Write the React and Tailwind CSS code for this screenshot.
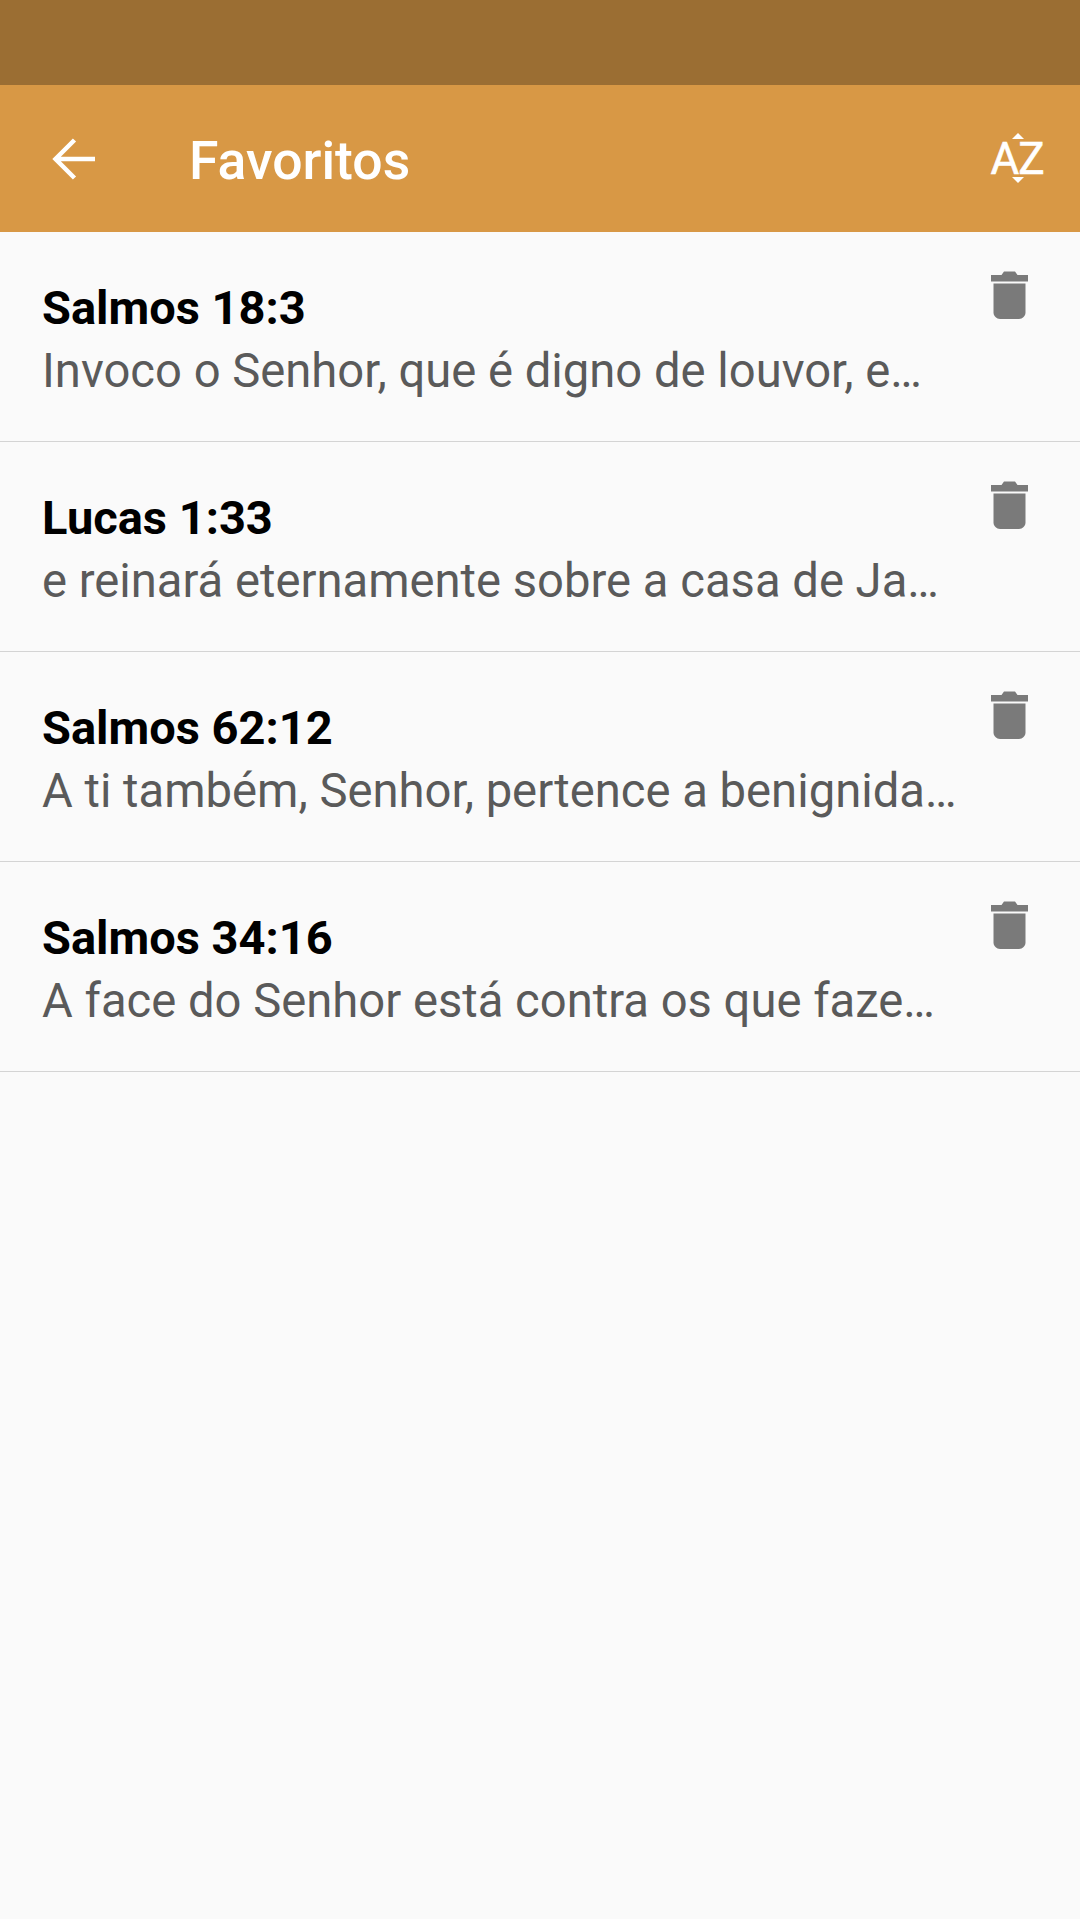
const favorites = [
  { ref: "Salmos 18:3", text: "Invoco o Senhor, que é digno de louvor, e…" },
  { ref: "Lucas 1:33", text: "e reinará eternamente sobre a casa de Ja…" },
  { ref: "Salmos 62:12", text: "A ti também, Senhor, pertence a benignida…" },
  { ref: "Salmos 34:16", text: "A face do Senhor está contra os que faze…" },
];

const TrashIcon = () => (
  <svg className="w-[37px] h-[49px] block" viewBox="0 0 37 48" fill="#7a7a7a">
    <path d="M0 3.500h10.500L13 0h11l2.500 3.500H37V10H0z" />
    <path d="M2.500 12h32v29c0 3.500-3 6.500-6.500 6.500H9c-3.500 0-6.500-3-6.500-6.500z" />
  </svg>
);

const SortIcon = () => (
  <div className="relative w-[54px] h-[54px] flex items-center justify-center">
    <svg className="absolute left-[22px] top-[1px] w-[12px] h-[6px]" viewBox="0 0 12 6" fill="#fff">
      <path d="M6 0l6 6H0z" />
    </svg>
    <span className="text-[44px] leading-none text-white tracking-[-1px] [-webkit-text-stroke:0.6px_#fff]">AZ</span>
    <svg className="absolute left-[22px] bottom-[3px] w-[12px] h-[6px]" viewBox="0 0 12 6" fill="#fff">
      <path d="M0 0h12L6 6z" />
    </svg>
  </div>
);

const Row = ({ item }) => (
  <div className="h-[210px] border-b border-[#d4d4d4] flex justify-between pl-[42px] pr-[52px]">
    <div className="pt-[46px] min-w-0">
      <div className="text-[47px] leading-[60px] font-bold text-black">{item.ref}</div>
      <div className="text-[47.200px] leading-[67px] text-[#5a5a5a] whitespace-nowrap">{item.text}</div>
    </div>
    <div className="pt-[39px]">
      <TrashIcon />
    </div>
  </div>
);

export default function App() {
  return (
    <div className="w-[1080px] h-[1919px] bg-[#fafafa] font-['Roboto',sans-serif]">
      <div className="h-[85px] bg-[#9b6e33]" />
      <header className="h-[147px] bg-[#d89845] flex items-center justify-between pl-[52px] pr-[36px]">
        <div className="flex items-center">
          <svg className="w-[43px] h-[42px]" viewBox="0 0 43 42" fill="none" stroke="#fff" strokeWidth="4.500">
            <path d="M43 21H4M22.500 2L3.500 21l19 19" />
          </svg>
          <h1 className="ml-[94px] mt-[4px] text-[53.500px] leading-none font-medium text-white">Favoritos</h1>
        </div>
        <SortIcon />
      </header>
      {favorites.map((item) => (
        <Row key={item.ref} item={item} />
      ))}
    </div>
  );
}
